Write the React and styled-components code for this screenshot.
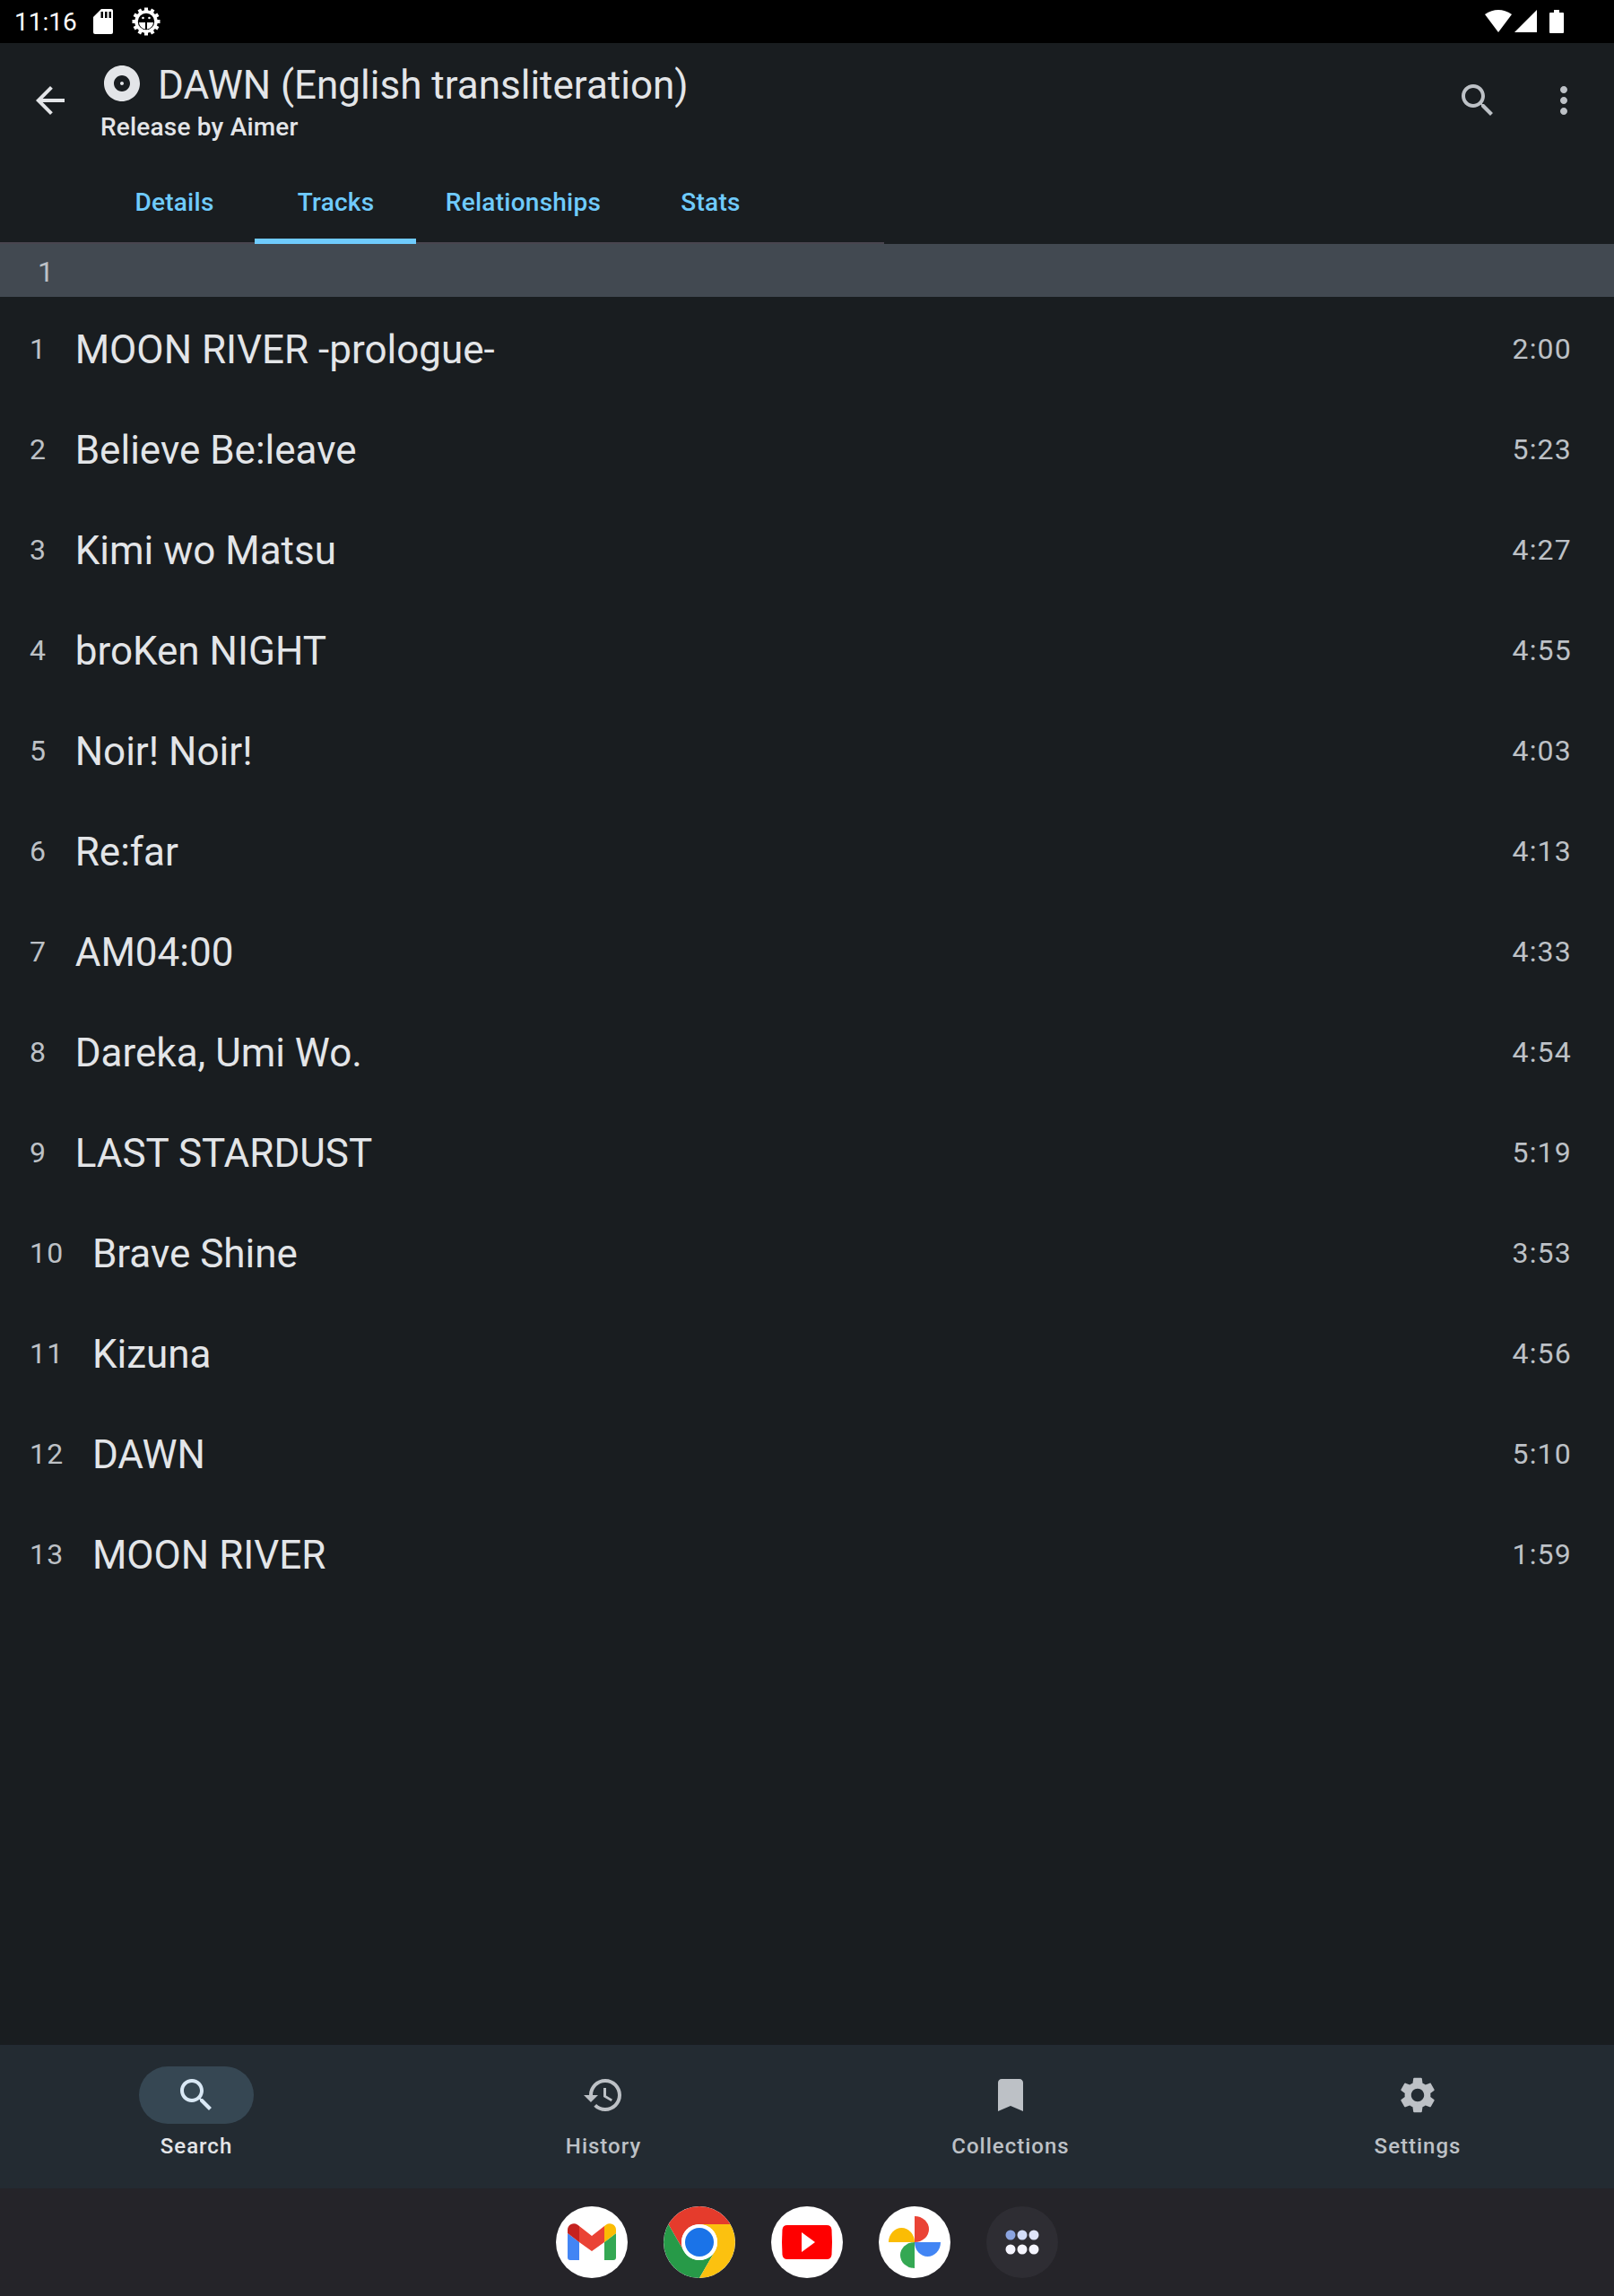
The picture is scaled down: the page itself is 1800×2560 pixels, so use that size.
import styled, { createGlobalStyle } from "styled-components";

const Global = createGlobalStyle`
  html, body {
    margin: 0;
    padding: 0;
    background: #191d20;
  }
  body {
    font-family: Roboto, "Liberation Sans", sans-serif;
  }
`;

const Screen = styled.div`
  width: 1800px;
  height: 2560px;
  display: flex;
  flex-direction: column;
  background: #191d20;
  overflow: hidden;
`;

const StatusBar = styled.div`
  height: 48px;
  flex: none;
  display: flex;
  align-items: center;
  justify-content: space-between;
  background: #000;
  color: #fff;
  padding: 0 56px 0 16px;
`;
const StatusGroup = styled.div`
  display: flex;
  align-items: center;
`;
const Clock = styled.span`
  font-size: 28px;
  width: 88px;
`;

const Toolbar = styled.div`
  height: 128px;
  flex: none;
  display: flex;
  align-items: flex-start;
  padding: 21px 32px 0;
  box-sizing: border-box;
`;
const BackBtn = styled.div`
  width: 48px;
  height: 48px;
  margin: 19px 32px 0 0;
  color: #e3e5e8;
`;
const TitleBox = styled.div`
  flex: 1;
  min-width: 0;
`;
const TitleRow = styled.div`
  display: flex;
  align-items: center;
  height: 48px;
  color: #e3e5e8;
`;
const Title = styled.div`
  font-size: 44px;
  line-height: 48px;
  margin-left: 16px;
  padding-top: 4px;
`;
const Subtitle = styled.div`
  font-size: 28px;
  font-weight: 500;
  letter-spacing: 0.2px;
  color: #e3e5e8;
  line-height: 36px;
  margin-top: 7px;
`;
const ToolIcons = styled.div`
  display: flex;
  gap: 48px;
  margin: 19px 0 0 0;
  color: #bdc1c6;
`;

const Tabs = styled.div`
  width: 986px;
  height: 94px;
  flex: none;
  display: flex;
  align-items: flex-start;
  border-bottom: 2px solid #49454f;
`;
const TabSpacer = styled.div`
  width: 104px;
  flex: none;
`;
const Tab = styled.div`
  width: ${(props) => props.$w}px;
  height: 96px;
  flex: none;
  box-sizing: border-box;
  display: flex;
  align-items: center;
  justify-content: center;
  padding: 9px 0 0 1px;
  font-size: 28px;
  font-weight: 500;
  letter-spacing: 0.25px;
  color: #6fcbfd;
  border-bottom: 6px solid ${(props) => (props.$active ? "#6fcbfd" : "transparent")};
`;

const DiscHeader = styled.div`
  height: 59px;
  flex: none;
  box-sizing: border-box;
  display: flex;
  align-items: center;
  padding: 3px 0 0 42px;
  font-size: 32px;
  color: #bdc1c6;
  background: #424951;
`;

const TrackList = styled.div`
  flex: 1;
  min-height: 0;
  display: flex;
  flex-direction: column;
  padding-top: 2px;
`;
const Track = styled.div`
  height: 112px;
  flex: none;
  display: flex;
  align-items: center;
  padding: 0 47px 0 33px;
`;
const TrackNo = styled.span`
  font-size: 32px;
  letter-spacing: 1.2px;
  color: #bdc1c6;
  margin-right: 31.500px;
`;
const TrackTitle = styled.span`
  flex: 1;
  font-size: 44px;
  padding-top: 2px;
  color: #e3e5e8;
`;
const TrackTime = styled.span`
  font-size: 32px;
  letter-spacing: 1.2px;
  color: #bdc1c6;
`;

const BottomNav = styled.div`
  height: 160px;
  flex: none;
  display: flex;
  gap: 16px;
  background: #232b32;
`;
const NavItem = styled.div`
  flex: 1;
  display: flex;
  flex-direction: column;
  align-items: center;
  padding-top: 24px;
  color: ${(props) => (props.$active ? "#e3e5e8" : "#bdc1c6")};
`;
const NavPill = styled.div`
  width: 128px;
  height: 64px;
  border-radius: 32px;
  display: flex;
  align-items: center;
  justify-content: center;
  background: ${(props) => (props.$active ? "#364753" : "transparent")};
  color: ${(props) => (props.$active ? "#d9e8f5" : "#bdc1c6")};
`;
const NavLabel = styled.span`
  font-size: 24px;
  font-weight: 500;
  letter-spacing: 1px;
  margin-top: 11px;
`;

const SystemDock = styled.div`
  height: 120px;
  flex: none;
  display: flex;
  align-items: center;
  justify-content: center;
  gap: 40px;
  background: #252429;
`;
const DockApp = styled.div`
  width: 80px;
  height: 80px;
  border-radius: 50%;
  overflow: hidden;
  background: ${(props) => props.$bg || "#fff"};
`;

const Icon = ({ d, size = 48 }) => (
  <svg width={size} height={size} viewBox="0 0 24 24" fill="currentColor">
    <path d={d} />
  </svg>
);

const ICONS = {
  back: "M20 11H7.83l5.59-5.59L12 4l-8 8 8 8 1.41-1.41L7.83 13H20v-2z",
  album:
    "M12 2C6.48 2 2 6.48 2 12s4.48 10 10 10 10-4.48 10-10S17.52 2 12 2zm0 14.5c-2.49 0-4.5-2.01-4.5-4.5S9.51 7.5 12 7.5s4.5 2.01 4.5 4.5-2.01 4.5-4.5 4.5zm0-5.5c-.55 0-1 .45-1 1s.45 1 1 1 1-.45 1-1-.45-1-1-1z",
  search:
    "M15.5 14h-.79l-.28-.27C15.41 12.59 16 11.11 16 9.5 16 5.91 13.09 3 9.5 3S3 5.91 3 9.5 5.91 16 9.5 16c1.61 0 3.09-.59 4.23-1.57l.27.28v.79l5 4.99L20.49 19l-4.99-5zm-6 0C7.01 14 5 11.99 5 9.5S7.01 5 9.5 5 14 7.01 14 9.5 11.99 14 9.5 14z",
  more:
    "M12 8c1.1 0 2-.9 2-2s-.9-2-2-2-2 .9-2 2 .9 2 2 2zm0 2c-1.1 0-2 .9-2 2s.9 2 2 2 2-.9 2-2-.9-2-2-2zm0 6c-1.1 0-2 .9-2 2s.9 2 2 2 2-.9 2-2-.9-2-2-2z",
  history:
    "M13 3c-4.97 0-9 4.03-9 9H1l3.89 3.89.07.14L9 12H6c0-3.87 3.13-7 7-7s7 3.13 7 7-3.13 7-7 7c-1.93 0-3.68-.79-4.94-2.06l-1.42 1.42C8.27 19.99 10.51 21 13 21c4.97 0 9-4.03 9-9s-4.03-9-9-9zm-1 5v5l4.28 2.54.72-1.21-3.5-2.08V8H12z",
  bookmark: "M17 3H7c-1.1 0-1.99.9-1.99 2L5 21l7-3 7 3V5c0-1.1-.9-2-2-2z",
  settings:
    "M19.14 12.94c.04-.3.06-.61.06-.94 0-.32-.02-.64-.07-.94l2.03-1.58c.18-.14.23-.41.12-.61l-1.92-3.32c-.12-.22-.37-.29-.59-.22l-2.39.96c-.5-.38-1.03-.7-1.62-.94l-.36-2.54c-.04-.24-.24-.41-.48-.41h-3.84c-.24 0-.43.17-.47.41l-.36 2.54c-.59.24-1.13.57-1.62.94l-2.39-.96c-.22-.08-.47 0-.59.22L2.74 8.87c-.12.21-.08.47.12.61l2.03 1.58c-.05.3-.09.63-.09.94s.02.64.07.94l-2.03 1.58c-.18.14-.23.41-.12.61l1.92 3.32c.12.22.37.29.59.22l2.39-.96c.5.38 1.03.7 1.62.94l.36 2.54c.05.24.24.41.48.41h3.84c.24 0 .44-.17.47-.41l.36-2.54c.59-.24 1.13-.56 1.62-.94l2.39.96c.22.08.47 0 .59-.22l1.92-3.32c.12-.22.07-.47-.12-.61l-2.01-1.58zM12 15.6c-1.98 0-3.6-1.62-3.6-3.6s1.62-3.6 3.6-3.6 3.6 1.62 3.6 3.6-1.62 3.6-3.6 3.6z",
};

const SdCard = () => (
  <svg width="22" height="28" viewBox="0 0 22 28">
    <path fill="#fff" d="M9 0h11a2 2 0 0 1 2 2v24a2 2 0 0 1-2 2H2a2 2 0 0 1-2-2V9z" />
    <path fill="#000" d="M8.500 3h2.500v7H8.500zM13 3h2.500v7H13zM17.500 3H20v7h-2.500z" />
  </svg>
);

const DebugGear = () => {
  const teeth = [0, 30, 60, 90, 120, 150, 180, 210, 240, 270, 300, 330];
  return (
    <svg width="32" height="32" viewBox="0 0 32 32" style={{ marginLeft: 21 }}>
      {teeth.map((a) => (
        <rect key={a} x="14" y="0.500" width="4" height="5" fill="#fff" transform={`rotate(${a} 16 16)`} />
      ))}
      <circle cx="16" cy="16" r="11" fill="none" stroke="#fff" strokeWidth="3.500" />
      <path fill="#fff" d="M8 17h7v7.500A8 8 0 0 1 8 17zM17 17h7a8 8 0 0 1-7 7.500z" />
      <circle cx="12.500" cy="12" r="1.300" fill="#fff" />
      <circle cx="19.500" cy="12" r="1.300" fill="#fff" />
    </svg>
  );
};

const SystemIcons = () => (
  <svg width="88" height="28" viewBox="0 0 88 28" fill="#fff">
    <path d="M0 6Q15-4 30 6L15 26z" />
    <path d="M33 26L58 1v25z" />
    <path d="M73 4h4V1h6v3h4a1 1 0 0 1 1 1v21a1 1 0 0 1-1 1H73a1 1 0 0 1-1-1V5a1 1 0 0 1 1-1z" />
  </svg>
);

const GmailLogo = () => (
  <svg width="80" height="80" viewBox="0 0 80 80">
    <path fill="#4285f4" d="M13 30l13 10v20H16a3 3 0 0 1-3-3z" />
    <path fill="#34a853" d="M67 30L54 40v20h10a3 3 0 0 0 3-3z" />
    <path fill="#ea4335" d="M26 22l14 11 14-11v18L40 50 26 40z" />
    <path fill="#c5221f" d="M13 30v-4a7 7 0 0 1 11-5.500l2 1.500v18z" />
    <path fill="#fbbc04" d="M67 30v-4a7 7 0 0 0-11-5.500L54 22v18z" />
  </svg>
);

const ChromeLogo = () => (
  <svg width="80" height="80" viewBox="0 0 80 80">
    <path fill="#e53b2c" d="M40 0A40 40 0 0 1 74.600 20H40A20 20 0 0 0 22.700 50L5.400 20A40 40 0 0 1 40 0z" />
    <path fill="#279a48" d="M5.400 20L22.700 50A20 20 0 0 0 57.300 50L40 80A40 40 0 0 1 5.400 20z" />
    <path fill="#fcc10f" d="M74.600 20A40 40 0 0 1 40 80L57.300 50A20 20 0 0 0 40 20H74.600z" />
    <circle cx="40" cy="40" r="20" fill="#fff" />
    <circle cx="40" cy="40" r="16" fill="#1a73e8" />
  </svg>
);

const YoutubeLogo = () => (
  <svg width="80" height="80" viewBox="0 0 80 80">
    <path fill="#f00" d="M18 21h44q5 0 5.500 5 1 14 0 28-.5 5-5.500 5H18q-5 0-5.500-5-1-14 0-28 .5-5 5.500-5z" />
    <path fill="#fff" d="M34 29l15 11-15 11z" />
  </svg>
);

const PhotosLogo = () => {
  const petals = [
    { fill: "#ea4335", turn: 0 },
    { fill: "#4285f4", turn: 90 },
    { fill: "#34a853", turn: 180 },
    { fill: "#fbbc04", turn: 270 },
  ];
  return (
    <svg width="80" height="80" viewBox="0 0 80 80">
      {petals.map((p) => (
        <path key={p.turn} fill={p.fill} d="M40 11a16 14.500 0 0 1 0 29z" transform={`rotate(${p.turn} 40 40)`} />
      ))}
    </svg>
  );
};

const AppsDots = () => {
  const dots = [
    [27, 32, "#8ba4e0"],
    [40, 32, "#d2dcf8"],
    [53, 32, "#dfe4f9"],
    [27, 48, "#f5f5ff"],
    [40, 48, "#f5f5ff"],
    [53, 48, "#f5f5ff"],
  ];
  return (
    <svg width="80" height="80" viewBox="0 0 80 80">
      {dots.map(([x, y, c]) => (
        <circle key={`${x}-${y}`} cx={x} cy={y} r="5.500" fill={c} />
      ))}
    </svg>
  );
};

const tracks = [
  ["MOON RIVER -prologue-", "2:00"],
  ["Believe Be:leave", "5:23"],
  ["Kimi wo Matsu", "4:27"],
  ["broKen NIGHT", "4:55"],
  ["Noir! Noir!", "4:03"],
  ["Re:far", "4:13"],
  ["AM04:00", "4:33"],
  ["Dareka, Umi Wo.", "4:54"],
  ["LAST STARDUST", "5:19"],
  ["Brave Shine", "3:53"],
  ["Kizuna", "4:56"],
  ["DAWN", "5:10"],
  ["MOON RIVER", "1:59"],
];

const tabs = [
  { label: "Details", w: 180 },
  { label: "Tracks", w: 180, active: true },
  { label: "Relationships", w: 238 },
  { label: "Stats", w: 180 },
];

const navItems = [
  { label: "Search", icon: ICONS.search, active: true },
  { label: "History", icon: ICONS.history },
  { label: "Collections", icon: ICONS.bookmark },
  { label: "Settings", icon: ICONS.settings },
];

export default function App() {
  return (
    <Screen>
      <Global />
      <StatusBar>
        <StatusGroup>
          <Clock>11:16</Clock>
          <SdCard />
          <DebugGear />
        </StatusGroup>
        <StatusGroup>
          <SystemIcons />
        </StatusGroup>
      </StatusBar>

      <Toolbar>
        <BackBtn>
          <Icon d={ICONS.back} />
        </BackBtn>
        <TitleBox>
          <TitleRow>
            <Icon d={ICONS.album} />
            <Title>DAWN (English transliteration)</Title>
          </TitleRow>
          <Subtitle>Release by Aimer</Subtitle>
        </TitleBox>
        <ToolIcons>
          <Icon d={ICONS.search} />
          <Icon d={ICONS.more} />
        </ToolIcons>
      </Toolbar>

      <Tabs>
        <TabSpacer />
        {tabs.map((t) => (
          <Tab key={t.label} $w={t.w} $active={t.active}>
            {t.label}
          </Tab>
        ))}
      </Tabs>

      <DiscHeader>1</DiscHeader>

      <TrackList>
        {tracks.map(([name, time], i) => (
          <Track key={i}>
            <TrackNo>{i + 1}</TrackNo>
            <TrackTitle>{name}</TrackTitle>
            <TrackTime>{time}</TrackTime>
          </Track>
        ))}
      </TrackList>

      <BottomNav>
        {navItems.map((n) => (
          <NavItem key={n.label} $active={n.active}>
            <NavPill $active={n.active}>
              <Icon d={n.icon} />
            </NavPill>
            <NavLabel>{n.label}</NavLabel>
          </NavItem>
        ))}
      </BottomNav>

      <SystemDock>
        <DockApp><GmailLogo /></DockApp>
        <DockApp><ChromeLogo /></DockApp>
        <DockApp><YoutubeLogo /></DockApp>
        <DockApp><PhotosLogo /></DockApp>
        <DockApp $bg="#2e2d33"><AppsDots /></DockApp>
      </SystemDock>
    </Screen>
  );
}
